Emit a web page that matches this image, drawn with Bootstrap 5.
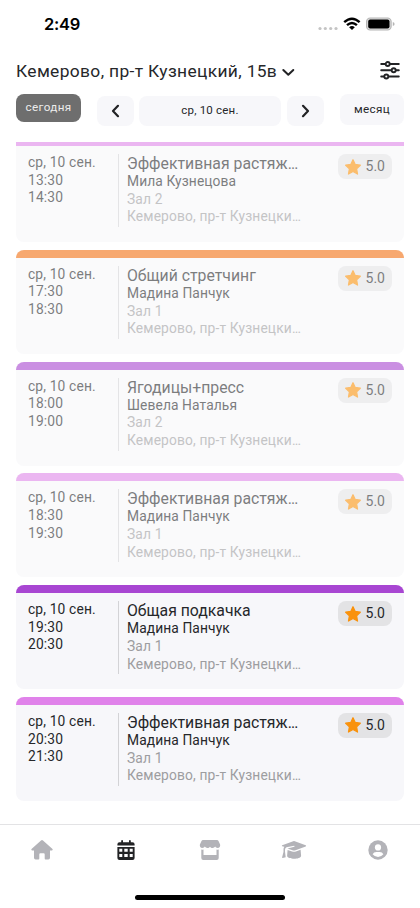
<!DOCTYPE html>
<html lang="ru">
<head>
<meta charset="utf-8">
<meta name="viewport" content="width=device-width, initial-scale=1">
<title>Расписание</title>
<link href="https://cdn.jsdelivr.net/npm/bootstrap@5.3.0/dist/css/bootstrap.min.css" rel="stylesheet">
<style>
body{font-family:Roboto,"Liberation Sans",sans-serif;color:#26272a;background:#fff;height:908px;overflow:hidden}
svg{display:block;flex:none}
.status{height:48px;padding:0 22px 0 44px}
.clock{font:600 16.500px/20px Inter,sans-serif;letter-spacing:-.3px;color:#000}
.place{height:46px;padding:0 20px 1px 16px}
.place-name{font-size:17.400px;line-height:22px;letter-spacing:.35px}
.filters{height:48px;padding:0 16px}
.chip{height:30px;border-radius:8px;background:#f7f7fa;border:0;padding:0;font-size:11.700px;letter-spacing:.35px;color:#26272a;display:flex;align-items:center;justify-content:center;flex:none}
.chip-today{width:65px;height:28px;background:#6e6e6e;color:#ececec}
.chip-arrow{width:37px;margin-top:2px}
.chip-date{width:142px;margin-top:2px;font-size:11.500px;letter-spacing:.2px}
.chip-month{width:64px;height:31px}
.stepper{gap:5.500px;margin-left:-1px}
.lesson{height:104px;margin-bottom:7.8px;border-radius:8px;overflow:hidden;background:#f7f7fa}
.lesson.past{opacity:.6}
.stripe{height:8px}
.lesson.cut{height:100px;border-radius:0 0 8px 8px}
.cut .stripe{height:4px}
.c-pink{background:#e082ea}.c-orange{background:#f7741e}.c-violet{background:#a846d2}
.past .c-pink{background:#df87e8}.past .c-orange{background:#f37011}.past .c-violet{background:#a845d0}
.lesson-body{padding:8px 12px 0}
.when{width:91px;height:73px;border-right:1px solid #d3d3d6;font-size:13.800px;line-height:17.6px;letter-spacing:.15px}
.what{padding-left:8px;width:186px;font-size:13.800px;line-height:17.7px;white-space:nowrap}
.name{font-size:15.800px;line-height:18px;margin-top:1px}
.coach{letter-spacing:.1px}
.dim{color:#9d9da0;letter-spacing:.14px}
.dots{letter-spacing:-.8px}
.score{width:54px;height:25px;border-radius:8px;background:#e3e3e5;font-size:14px;gap:4.5px}
.tabs{height:83px;border-top:1px solid #e3e3e5;margin-top:23.500px}
.tabs a{width:84px;height:49px;color:#b3b3b8;display:flex;align-items:center;justify-content:center}
.tabs a.on{color:#222325}
.home-bar{width:150px;height:5px;border-radius:3px;background:#000;margin:21px auto 0}
</style>
<script src="https://cdn.jsdelivr.net/npm/bootstrap@5.3.0/dist/js/bootstrap.bundle.min.js"></script>
</head>
<body>
<header>
  <div class="status d-flex align-items-center justify-content-between">
    <span class="clock">2:49</span>
    <svg width="82" height="20" viewBox="0 0 82 20">
      <g fill="#c4c4c4"><circle cx="4" cy="14.5" r="1.6"/><circle cx="9.3" cy="14.5" r="1.6"/><circle cx="14.7" cy="14.5" r="1.6"/><circle cx="20" cy="14.5" r="1.6"/></g>
      <g fill="none" stroke="#000" stroke-width="2.4"><path d="M28.2 8.2Q36 1.2 43.6 8.2M31 11.2Q36 6.7 40.9 11.2"/></g><path d="M33.1 13.2Q36 10.9 38.8 13.2L36 16Z"/>
      <rect x="50.6" y="4" width="24.5" height="12" rx="3.6" fill="#ddd" stroke="#b5b5b5" stroke-width="1.2"/><rect x="52.2" y="5.6" width="21.3" height="8.8" rx="2"/><path d="M76.8 8v4q1.8-.6 1.8-2t-1.8-2" fill="#b5b5b5"/>
    </svg>
  </div>
  <div class="place d-flex align-items-center justify-content-between">
    <div class="d-flex align-items-center"><span class="place-name text-nowrap me-1">Кемерово, пр-т Кузнецкий, 15в</span>
      <svg class="mt-1" width="14" height="9" viewBox="0 0 13 9" fill="none" stroke="#222325" stroke-width="2" stroke-linecap="round" stroke-linejoin="round"><path d="M1.8 2l5 4.800 5-4.800"/></svg></div>
    <svg width="20" height="20" viewBox="0 0 20 20" fill="#fff" stroke="#222325" stroke-width="1.9" stroke-linecap="round"><path d="M1.2 3h17.600M1.2 9.300h17.600M1.2 15.500h17.600"/><circle cx="7.7" cy="3" r="2"/><circle cx="13.7" cy="9.300" r="2"/><circle cx="6.3" cy="15.500" r="2"/></svg>
  </div>
  <div class="filters d-flex align-items-start justify-content-between">
    <button class="chip chip-today">сегодня</button>
    <div class="stepper d-flex">
      <button class="chip chip-arrow" aria-label="Назад"><svg width="9" height="14" viewBox="0 0 9 14" fill="none" stroke="#222325" stroke-width="2.2" stroke-linecap="round" stroke-linejoin="round"><path d="M7 1.8L2 7l5 5.2"/></svg></button>
      <button class="chip chip-date">ср, 10 сен.</button>
      <button class="chip chip-arrow" aria-label="Вперёд"><svg width="9" height="14" viewBox="0 0 9 14" fill="none" stroke="#222325" stroke-width="2.2" stroke-linecap="round" stroke-linejoin="round"><path d="M2 1.8L7 7l-5 5.2"/></svg></button>
    </div>
    <button class="chip chip-month">месяц</button>
  </div>
</header>
<svg class="d-none"><symbol id="star" viewBox="0 0 16 16"><path d="M8 .8l2.2 4.7 5.1.7-3.7 3.6.9 5.2L8 12.5 3.5 15l.9-5.2L.7 6.2l5.1-.7z" fill="#f9920d" stroke="#f9920d" stroke-width="1.3" stroke-linejoin="round"/></symbol></svg>
<main class="px-3" id="lessons">
  <article class="lesson cut past"><div class="stripe c-pink"></div><div class="lesson-body d-flex"><div class="when">ср, 10 сен.<br>13:30<br>14:30</div><div class="what"><div class="name">Эффективная растяж<span class="dots">...</span></div><div class="coach">Мила Кузнецова</div><div class="dim">Зал 2</div><div class="dim">Кемерово, пр-т Кузнецки<span class="dots">...</span></div></div><div class="score d-flex align-items-center justify-content-center ms-auto"><svg width="16" height="16"><use href="#star"/></svg>5.0</div></div></article>
  <article class="lesson past"><div class="stripe c-orange"></div><div class="lesson-body d-flex"><div class="when">ср, 10 сен.<br>17:30<br>18:30</div><div class="what"><div class="name">Общий стретчинг</div><div class="coach">Мадина Панчук</div><div class="dim">Зал 1</div><div class="dim">Кемерово, пр-т Кузнецки<span class="dots">...</span></div></div><div class="score d-flex align-items-center justify-content-center ms-auto"><svg width="16" height="16"><use href="#star"/></svg>5.0</div></div></article>
  <article class="lesson past"><div class="stripe c-violet"></div><div class="lesson-body d-flex"><div class="when">ср, 10 сен.<br>18:00<br>19:00</div><div class="what"><div class="name">Ягодицы+пресс</div><div class="coach">Шевела Наталья</div><div class="dim">Зал 2</div><div class="dim">Кемерово, пр-т Кузнецки<span class="dots">...</span></div></div><div class="score d-flex align-items-center justify-content-center ms-auto"><svg width="16" height="16"><use href="#star"/></svg>5.0</div></div></article>
  <article class="lesson past"><div class="stripe c-pink"></div><div class="lesson-body d-flex"><div class="when">ср, 10 сен.<br>18:30<br>19:30</div><div class="what"><div class="name">Эффективная растяж<span class="dots">...</span></div><div class="coach">Мадина Панчук</div><div class="dim">Зал 1</div><div class="dim">Кемерово, пр-т Кузнецки<span class="dots">...</span></div></div><div class="score d-flex align-items-center justify-content-center ms-auto"><svg width="16" height="16"><use href="#star"/></svg>5.0</div></div></article>
  <article class="lesson"><div class="stripe c-violet"></div><div class="lesson-body d-flex"><div class="when">ср, 10 сен.<br>19:30<br>20:30</div><div class="what"><div class="name">Общая подкачка</div><div class="coach">Мадина Панчук</div><div class="dim">Зал 1</div><div class="dim">Кемерово, пр-т Кузнецки<span class="dots">...</span></div></div><div class="score d-flex align-items-center justify-content-center ms-auto"><svg width="16" height="16"><use href="#star"/></svg>5.0</div></div></article>
  <article class="lesson"><div class="stripe c-pink"></div><div class="lesson-body d-flex"><div class="when">ср, 10 сен.<br>20:30<br>21:30</div><div class="what"><div class="name">Эффективная растяж<span class="dots">...</span></div><div class="coach">Мадина Панчук</div><div class="dim">Зал 1</div><div class="dim">Кемерово, пр-т Кузнецки<span class="dots">...</span></div></div><div class="score d-flex align-items-center justify-content-center ms-auto"><svg width="16" height="16"><use href="#star"/></svg>5.0</div></div></article>
</main>
<nav class="tabs">
  <div class="d-flex">
    <a href="#" aria-label="Главная"><svg width="24" height="22" viewBox="0 0 24 22" fill="currentColor"><path d="M11 1.4q1-.8 2 0L22.5 10q.8 1.4-.7 1.6H20v7.2q0 1.8-1.6 1.8h-2.9q-.8 0-.8-1v-4.2q0-1.2-1-1.2h-3.4q-1 0-1 1.2v4.2q0 1-.8 1H5.600Q4 20.600 4 18.800v-7.200H2.200Q.700 11.400 1.500 10z"/></svg></a>
    <a href="#" class="on" aria-label="Расписание"><svg width="18" height="20" viewBox="0 0 18 20" fill="currentColor"><path fill-rule="evenodd" d="M4.200 2.300V.9q0-.9.9-.9T6 .9v1.400h6V.9q0-.9.9-.9t.9.9v1.400h1.700q2.100 0 2.100 2v1.200H.4V4.300q0-2 2.100-2zM.4 7h17.200v11q0 2-2.100 2h-13Q.4 20 .4 18zM2.300 8.800v3h3v-3zM7.300 8.800v3h3.400v-3zm5.400 0v3h3v-3zM2.300 14v3h3v-3zM7.300 14v3h3.400v-3zm5.400 0v3h3v-3z"/></svg></a>
    <a href="#" aria-label="Магазин"><svg width="22" height="20" viewBox="0 0 22 20" fill="currentColor"><path d="M4 0h14q1 0 1.500 1l1.600 3.600c.5 1.900-.7 3.400-2.400 3.400-1.300 0-2.200-.9-2.500-1.400-.7.900-1.500 1.400-2.600 1.400S11.500 7.500 11 6.700c-.6.8-1.500 1.300-2.600 1.300s-2-.6-2.600-1.400C5.400 7.200 4.600 8 3.300 8 1.600 8 .4 6.500.9 4.600L2.500 1Q3 0 4 0zM2.300 9.500q1.200.3 2.200-.1V15h13V9.400q1 .4 2.200.1V18q0 2-2 2H4.300q-2 0-2-2z"/></svg></a>
    <a href="#" aria-label="Обучение"><svg width="26" height="20" viewBox="0 0 26 20" fill="currentColor"><path d="M12.200 1.200q.8-.3 1.600 0L24.700 5.300q.9.600 0 1.200L14.500 10.200q-1.500.6-3 0L6.500 8.400l6.800-1.600q.7-.6-.1-1L5.500 7.300Q4 8 4 9.700v2l.7 5.600-3 .8q-.8 0-.6-.8L2.500 12v-2.500q0-1.500.8-2.700L1.200 6.300q-.8-.7 0-1.100z"/><path d="M6.600 9.900l4.500 1.600q1.900.7 3.800 0l4.700-1.700.5 6.200c-1 3.700-12.900 3.700-14 0z"/></svg></a>
    <a href="#" aria-label="Профиль"><svg width="20" height="20" viewBox="0 0 20 20"><circle cx="10" cy="10" r="9.700" fill="currentColor"/><circle cx="10" cy="7.400" r="3.100" fill="#fff"/><path d="M4.600 14.300q1.200-2.200 3.700-2.200h3.400q2.500 0 3.700 2.200Q13.200 17 10 17t-5.400-2.700" fill="#fff"/></svg></a>
  </div>
  <div class="home-bar"></div>
</nav>
</body>
</html>
